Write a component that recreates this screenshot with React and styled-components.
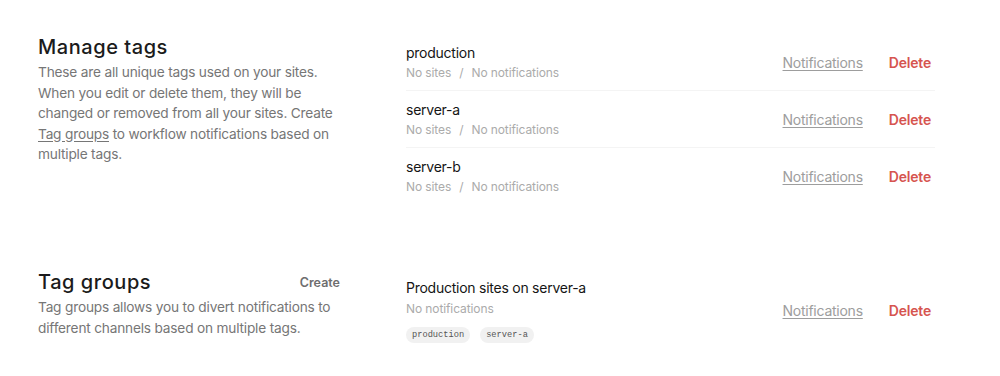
import React from "react";
import styled, { createGlobalStyle } from "styled-components";

const Global = createGlobalStyle`
  html, body { margin: 0; padding: 0; background: #ffffff; }
  body { font-family: Inter, "Noto Sans", sans-serif; -webkit-font-smoothing: antialiased; }
`;

const Page = styled.div`
  width: 1000px;
  box-sizing: border-box;
  padding: 34px 65px 0 38px;
  display: flex;
  flex-direction: column;
  gap: 65px;
`;

const Section = styled.section`
  display: grid;
  grid-template-columns: 302px 1fr;
  column-gap: 66px;
  align-items: start;
`;

const Intro = styled.div`
  padding-top: 1px;
  display: flex;
  flex-direction: column;
`;

const IntroHead = styled.div`
  display: flex;
  align-items: center;
  justify-content: space-between;
`;

const Title = styled.h2`
  margin: 0;
  font-size: 20px;
  line-height: 24px;
  font-weight: 500;
  color: #1b1b1b;
  letter-spacing: 0.55px;
`;

const CreateButton = styled.button`
  border: 0;
  background: none;
  padding: 0;
  margin-top: 1px;
  font-family: inherit;
  font-size: 12.5px;
  font-weight: 600;
  color: #6e6e6e;
  cursor: pointer;
`;

const Desc = styled.p`
  margin: ${(p) => p.$gap}px 0 0;
  font-size: 13.7px;
  line-height: 20.5px;
  letter-spacing: -0.2px;
  color: #767676;
`;

const InlineLink = styled.a`
  color: #767676;
  text-decoration: underline;
  text-underline-offset: 2px;
`;

const List = styled.div`
  display: flex;
  flex-direction: column;
`;

const Row = styled.div`
  display: flex;
  align-items: center;
  justify-content: space-between;
  padding: 9px 4px 8px 0;
  border-bottom: 1px solid #f4f4f4;
  &:last-child { border-bottom: 0; }
`;

const Info = styled.div`
  display: flex;
  flex-direction: column;
`;

const Name = styled.div`
  font-size: 14px;
  line-height: 20px;
  letter-spacing: -0.25px;
  color: #151515;
`;

const Meta = styled.div`
  margin-top: ${(p) => p.$mt || 1}px;
  font-size: 12px;
  line-height: 18px;
  letter-spacing: -0.1px;
  color: #ababab;
`;

const Slash = styled.span`
  margin: 0 8px;
`;

const Tags = styled.div`
  display: flex;
  gap: 10px;
  margin-top: 9px;
`;

const Tag = styled.span`
  display: inline-flex;
  align-items: center;
  height: 16px;
  padding: 0 6px;
  border-radius: 8px;
  background: #f1f1f1;
  font-family: "Liberation Mono", "DejaVu Sans Mono", monospace;
  font-size: 8.7px;
  color: #555;
`;

const Actions = styled.div`
  display: flex;
  align-items: center;
  gap: 26px;
`;

const NotifLink = styled.a`
  font-size: 14px;
  letter-spacing: -0.25px;
  color: #9d9d9d;
  text-decoration: underline;
  text-underline-offset: 2px;
  cursor: pointer;
`;

const DeleteButton = styled.button`
  border: 0;
  background: none;
  padding: 0;
  font-family: inherit;
  font-size: 14px;
  font-weight: 600;
  letter-spacing: -0.2px;
  color: #d6544f;
  cursor: pointer;
`;

const tags = ["production", "server-a", "server-b"];

export default function App() {
  return (
    <>
      <Global />
      <Page>
        <Section>
          <Intro>
            <Title>Manage tags</Title>
            <Desc $gap={3}>
              These are all unique tags used on your sites. When you edit or
              delete them, they will be changed or removed from all your sites.
              Create <InlineLink>Tag groups</InlineLink> to workflow
              notifications based on multiple tags.
            </Desc>
          </Intro>
          <List>
            {tags.map((t) => (
              <Row key={t}>
                <Info>
                  <Name>{t}</Name>
                  <Meta>
                    No sites<Slash>/</Slash>No notifications
                  </Meta>
                </Info>
                <Actions>
                  <NotifLink>Notifications</NotifLink>
                  <DeleteButton>Delete</DeleteButton>
                </Actions>
              </Row>
            ))}
          </List>
        </Section>
        <Section>
          <Intro>
            <IntroHead>
              <Title>Tag groups</Title>
              <CreateButton>Create</CreateButton>
            </IntroHead>
            <Desc $gap={3}>
              Tag groups allows you to divert notifications to different
              channels based on multiple tags.
            </Desc>
          </Intro>
          <List>
            <Row>
              <Info>
                <Name>Production sites on server-a</Name>
                <Meta $mt={2}>No notifications</Meta>
                <Tags>
                  <Tag>production</Tag>
                  <Tag>server-a</Tag>
                </Tags>
              </Info>
              <Actions>
                <NotifLink>Notifications</NotifLink>
                <DeleteButton>Delete</DeleteButton>
              </Actions>
            </Row>
          </List>
        </Section>
      </Page>
    </>
  );
}
